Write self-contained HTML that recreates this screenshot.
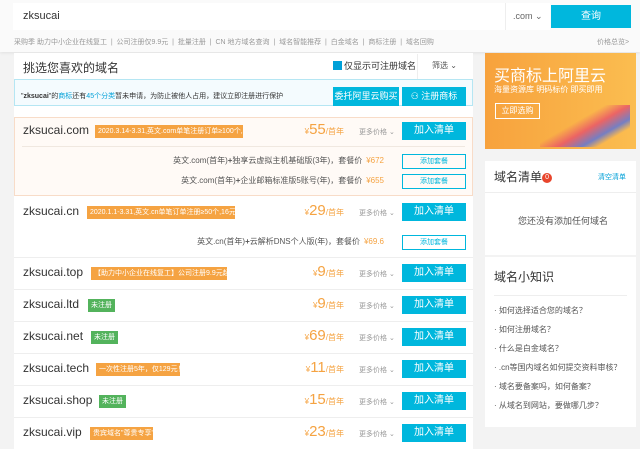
<!DOCTYPE html>
<html><head><meta charset="utf-8"><style>
*{margin:0;padding:0;box-sizing:border-box}
body{width:640px;height:449px;overflow:hidden;background:#f3f3f3;font-family:"Liberation Sans","Noto Sans CJK SC",sans-serif;position:relative;color:#333}
.a{position:absolute}
.top{left:0;top:0;width:640px;height:52px;background:#fafafa;box-shadow:0 1px 3px rgba(0,0,0,.08)}
.inp{left:13px;top:3px;width:537px;height:27px;background:#fff}
.btn{background:#00b7dd;color:#fff;text-align:center}
.panel{left:14px;top:53px;width:459px;height:396px;background:#fff}
.row{position:absolute;left:14px;width:459px;border-bottom:1px solid #eee}
.dn{position:absolute;left:9px;font-size:12px;color:#333}
.tag{position:absolute;height:13px;font-size:7px;line-height:13px;color:#fff;padding:0 3px;white-space:nowrap;overflow:hidden}
.or{background:#f5a342}.gr{background:#53b35c}
.pr{position:absolute;color:#f5a342;font-size:8px;text-align:right;width:60px}
.pr b{font-size:15px;font-weight:normal}
.mp{position:absolute;left:345px;font-size:7px;color:#999}
.add{position:absolute;left:388px;width:64px;height:18px;font-size:10px;line-height:18px}
.pk{position:absolute;font-size:8px;color:#555;text-align:right;right:89px;white-space:nowrap}
.pk i{font-style:normal;color:#f5a342;margin-left:4px}
.tc{position:absolute;left:388px;width:64px;height:15px;border:1px solid #00b7dd;font-size:7px;color:#00b7dd;text-align:center;line-height:13px}
.box{background:#fff;left:485px;width:151px}
.li{font-size:8px;color:#555;position:absolute;left:494px}
</style></head><body>
<div class="a top"></div>
<div class="a inp"></div>
<div class="a" style="left:23px;top:10px;font-size:11px;color:#333">zksucai</div>
<div class="a" style="left:505px;top:3px;width:45px;height:27px;border-left:1px solid #eee"></div>
<div class="a" style="left:513px;top:11px;font-size:9px;color:#666">.com &#8964;</div>
<div class="a btn" style="left:551px;top:5px;width:80px;height:23px;font-size:10px;line-height:23px">查询</div>
<div class="a" style="left:14px;top:37px;font-size:7px;color:#999;white-space:nowrap">采购季 助力中小企业在线复工 &nbsp;|&nbsp; 公司注册仅9.9元 &nbsp;|&nbsp; 批量注册 &nbsp;|&nbsp; CN 地方域名查询 &nbsp;|&nbsp; 域名智能推荐 &nbsp;|&nbsp; 白金域名 &nbsp;|&nbsp; 商标注册 &nbsp;|&nbsp; 域名回购</div>
<div class="a" style="left:597px;top:37px;font-size:7px;color:#999">价格总览&gt;</div>

<div class="a panel"></div>
<div class="a" style="left:23px;top:59px;font-size:12px;color:#333">挑选您喜欢的域名</div>
<div class="a" style="left:333px;top:61px;width:9px;height:9px;background:#00a0d8"></div>
<div class="a" style="left:344px;top:59px;font-size:9px;color:#333">仅显示可注册域名</div>
<div class="a" style="left:417px;top:54px;width:56px;height:25px;border-left:1px solid #eee"></div>
<div class="a" style="left:432px;top:60px;font-size:8px;color:#555">筛选 &#8964;</div>
<div class="a" style="left:14px;top:79px;width:459px;height:27px;border:1px solid #b5e6f3;background:#f4fbfe"></div>
<div class="a" style="left:21px;top:91px;font-size:7px;color:#333;white-space:nowrap">"<b>zksucai</b>"的<span style="color:#00a0d8">商标</span>还有<span style="color:#00a0d8">45个分类</span>暂未申请，为防止被他人占用，建议立即注册进行保护</div>
<div class="a btn" style="left:333px;top:87px;width:66px;height:19px;font-size:9px;line-height:19px">委托阿里云购买</div>
<div class="a btn" style="left:402px;top:87px;width:64px;height:19px;font-size:9px;line-height:19px">⚇ 注册商标</div>

<div class="row" style="top:117px;height:79px;background:#fffaf6;border:1px solid #f8dcc8"></div>
<div class="a" style="left:22px;top:146px;width:443px;border-top:1px solid #f0e8e0"></div>
<div class="row" style="top:196px;height:62px"></div>
<div class="row" style="top:258px;height:32px"></div>
<div class="row" style="top:290px;height:32px"></div>
<div class="row" style="top:322px;height:32px"></div>
<div class="row" style="top:354px;height:32px"></div>
<div class="row" style="top:386px;height:32px"></div>

<div class="a" style="left:14px;top:117px;width:459px;height:332px">
 <div class="dn" style="top:6px">zksucai.com</div><div class="tag or" style="left:81px;top:8px;width:148px">2020.3.14-3.31,英文.com单笔注册订单≥100个,30元</div>
 <div class="pr" style="left:270px;top:4px">¥<b>55</b>/首年</div><div class="mp" style="top:10px">更多价格 &#8964;</div>
 <div class="add btn" style="top:5px">加入清单</div>
 <div class="pk" style="top:38px">英文.com(首年)<b>+</b>独享云虚拟主机基础版(3年)，套餐价<i>¥672</i></div><div class="tc" style="top:37px">添加套餐</div>
 <div class="pk" style="top:58px">英文.com(首年)<b>+</b>企业邮箱标准版5账号(年)，套餐价<i>¥655</i></div><div class="tc" style="top:57px">添加套餐</div>

 <div class="dn" style="top:87px">zksucai.cn</div><div class="tag or" style="left:73px;top:89px;width:148px">2020.1.1-3.31,英文.cn单笔订单注册≥50个,16元/首年</div>
 <div class="pr" style="left:270px;top:85px">¥<b>29</b>/首年</div><div class="mp" style="top:91px">更多价格 &#8964;</div>
 <div class="add btn" style="top:86px">加入清单</div>
 <div class="pk" style="top:119px">英文.cn(首年)<b>+</b>云解析DNS个人版(年)，套餐价<i>¥69.6</i></div><div class="tc" style="top:118px">添加套餐</div>

 <div class="dn" style="top:148px">zksucai.top</div><div class="tag or" style="left:77px;top:150px;width:136px">【助力中小企业在线复工】公司注册9.9元起！</div>
 <div class="pr" style="left:270px;top:146px">¥<b>9</b>/首年</div><div class="mp" style="top:152px">更多价格 &#8964;</div><div class="add btn" style="top:147px">加入清单</div>

 <div class="dn" style="top:180px">zksucai.ltd</div><div class="tag gr" style="left:74px;top:182px;width:27px">未注册</div>
 <div class="pr" style="left:270px;top:178px">¥<b>9</b>/首年</div><div class="mp" style="top:184px">更多价格 &#8964;</div><div class="add btn" style="top:179px">加入清单</div>

 <div class="dn" style="top:212px">zksucai.net</div><div class="tag gr" style="left:77px;top:214px;width:27px">未注册</div>
 <div class="pr" style="left:270px;top:210px">¥<b>69</b>/首年</div><div class="mp" style="top:216px">更多价格 &#8964;</div><div class="add btn" style="top:211px">加入清单</div>

 <div class="dn" style="top:244px">zksucai.tech</div><div class="tag or" style="left:82px;top:246px;width:84px">一次性注册5年，仅129元！</div>
 <div class="pr" style="left:270px;top:242px">¥<b>11</b>/首年</div><div class="mp" style="top:248px">更多价格 &#8964;</div><div class="add btn" style="top:243px">加入清单</div>

 <div class="dn" style="top:276px">zksucai.shop</div><div class="tag gr" style="left:85px;top:278px;width:27px">未注册</div>
 <div class="pr" style="left:270px;top:274px">¥<b>15</b>/首年</div><div class="mp" style="top:280px">更多价格 &#8964;</div><div class="add btn" style="top:275px">加入清单</div>

 <div class="dn" style="top:308px">zksucai.vip</div><div class="tag or" style="left:76px;top:310px;width:63px">贵宾域名"尊贵专享"</div>
 <div class="pr" style="left:270px;top:306px">¥<b>23</b>/首年</div><div class="mp" style="top:312px">更多价格 &#8964;</div><div class="add btn" style="top:307px">加入清单</div>
</div>

<div class="a" style="left:485px;top:53px;width:151px;height:96px;background:linear-gradient(90deg,#f7a23d,#fbbd50)"></div>
<div class="a" style="left:494px;top:62px;font-size:16px;color:#fff">买商标上阿里云</div>
<div class="a" style="left:494px;top:84px;font-size:8px;color:#fff">海量资源库 明码标价 即买即用</div>
<div class="a" style="left:495px;top:103px;width:45px;height:16px;border:1px solid #fff;color:#fff;font-size:8px;text-align:center;line-height:14px">立即选购</div>
<div class="a" style="left:540px;top:105px;width:90px;height:42px;background:linear-gradient(150deg,transparent 40%,#e8506a 55%,#5470e0 70%,transparent 80%);opacity:.8"></div>

<div class="a box" style="top:161px;height:94px"></div>
<div class="a" style="left:494px;top:168px;font-size:12px;color:#333">域名清单<span style="display:inline-block;width:10px;height:10px;border-radius:5px;background:#e8452c;color:#fff;font-size:7px;text-align:center;line-height:10px;vertical-align:2px">0</span></div>
<div class="a" style="left:598px;top:172px;font-size:7px;color:#00a0d8">清空清单</div>
<div class="a" style="left:485px;top:192px;width:151px;border-top:1px solid #eee"></div>
<div class="a" style="left:518px;top:214px;font-size:9px;color:#555">您还没有添加任何域名</div>

<div class="a box" style="top:257px;height:170px"></div>
<div class="a" style="left:494px;top:268px;font-size:12px;color:#333">域名小知识</div>
<div class="a" style="left:494px;top:295px;width:133px;border-top:1px solid #eee"></div>
<div class="li" style="top:305px">· 如何选择适合您的域名？</div>
<div class="li" style="top:324px">· 如何注册域名？</div>
<div class="li" style="top:343px">· 什么是白金域名？</div>
<div class="li" style="top:362px">· .cn等国内域名如何提交资料审核？</div>
<div class="li" style="top:381px">· 域名要备案吗，如何备案？</div>
<div class="li" style="top:400px">· 从域名到网站，要做哪几步？</div>
</body></html>
